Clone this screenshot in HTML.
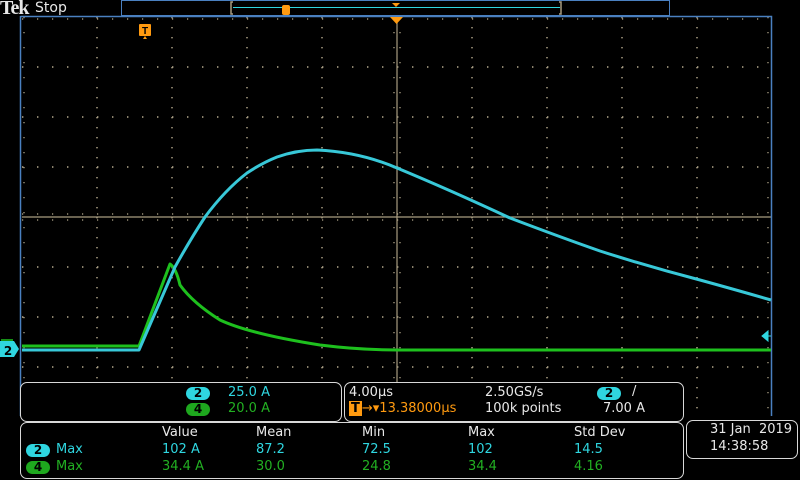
<!DOCTYPE html><html><head><style>
body{margin:0;width:800px;height:480px;background:#000;overflow:hidden;position:relative;font-family:"DejaVu Sans","Liberation Sans",sans-serif;}
.t{position:absolute;font-size:13px;white-space:nowrap;}
.c{color:#2fd6e0}.g{color:#22b022}.w{color:#e8e8e8}.o{color:#ff9a10}
.box{position:absolute;border:1px solid #d8d8d8;border-radius:7px;}
.pill{position:absolute;width:24px;height:13px;border-radius:7px;color:#000;font-weight:bold;font-size:12px;text-align:center;line-height:13px;}
</style></head><body>
<svg width="800" height="480" style="position:absolute;left:0;top:0">
<g stroke="#b8ac90" stroke-width="1.4" stroke-dasharray="1.4 13.6" fill="none">
<path d="M22 67H771M22 117H771M22 167H771M22 267H771M22 317H771M22 367H771"/>
</g>
<g stroke="#b8ac90" stroke-width="1.4" stroke-dasharray="1.4 8.6" fill="none">
<path d="M97 17V417M172 17V417M247 17V417M322 17V417M472 17V417M547 17V417M622 17V417M697 17V417"/>
</g>
<path d="M22 217H771M397 17V417" stroke="#a89c80" stroke-width="1.2"/>
<g stroke="#b8ac90" stroke-width="1.2" stroke-dasharray="1.2 13.8"><path d="M22 214H771M22 220H771M22 19H771M394 17V417M400 17V417M24 17V417M768 17V417"/></g>
<path d="M20.5 16V416M20.5 16.5H771.5V416" stroke="#4a80c0" stroke-width="1.5" fill="none"/>
<rect x="121.5" y="0.5" width="548" height="15" fill="none" stroke="#4a80c0"/>
<path d="M233 2H231V14H233M559 2H561V14H559" stroke="#a89c80" stroke-width="1.5" fill="none"/>
<path d="M233 7.5H560" stroke="#2fd6e0"/>
<path d="M392 3H400L396 7Z" fill="#ff9a10"/>
<path d="M390 17H403L396.5 24Z" fill="#ff9a10"/>
<rect x="282" y="5" width="8" height="10" rx="2" fill="#ff9a10"/>
<rect x="139" y="24" width="12" height="12" rx="1" fill="#ff9a10"/><path d="M145 36L143 39H147Z" fill="#ff9a10"/>
<text x="145" y="34" font-size="10" font-weight="bold" text-anchor="middle" fill="#000" font-family="Liberation Sans">T</text>
<path d="M22 346H139L170 264Q176 268 180 285Q193 303 220 320Q250 334 320 345Q360 350 397 350H771" stroke="#1ec01e" stroke-width="3" fill="none" stroke-linejoin="round"/>
<path d="M22 350H139L175 267Q190 240 205 217Q225 190 247 173Q262 163 277 157Q297 150 317 150Q360 152 397 168Q450 190 510 218Q560 237 600 251Q650 267 700 280Q740 291 771 300" stroke="#38c8d8" stroke-width="3" fill="none" stroke-linejoin="round"/>
<path d="M762 336L768 331V341Z M766 336H771" fill="#2fd6e0" stroke="#2fd6e0"/>
<path d="M0 341H14L19 349L14 357H0Z" fill="#2fd6e0"/><path d="M1 340H13" stroke="#1ec01e" stroke-width="1.5"/>
<text x="8" y="355" font-size="12" font-weight="bold" text-anchor="middle" fill="#000">2</text>
</svg>
<div class="t w" style="left:0;top:-3px;font-family:'Liberation Serif',serif;font-weight:bold;font-size:20px;letter-spacing:-1px">Tek</div>
<div class="t w" style="left:35px;top:0px;font-size:14px">Stop</div>
<div class="box" style="left:20px;top:382px;width:320px;height:38px;background:#000"></div>
<div class="pill" style="left:186px;top:387px;background:#2fd6e0">2</div>
<div class="pill" style="left:186px;top:403px;background:#1ea81e">4</div>
<div class="t c" style="left:228px;top:385px">25.0 A</div>
<div class="t g" style="left:228px;top:401px">20.0 A</div>
<div class="box" style="left:344px;top:382px;width:338px;height:38px;background:#000"></div>
<div class="t w" style="left:349px;top:385px">4.00µs</div>
<div class="t w" style="left:485px;top:385px">2.50GS/s</div>
<div class="pill" style="left:597px;top:387px;background:#2fd6e0">2</div>
<div class="t w" style="left:632px;top:384px">/</div>
<div class="t o" style="left:349px;top:401px"><span style="background:#ff9a10;color:#000;font-weight:bold;padding:0 2px">T</span>→▾13.38000µs</div>
<div class="t w" style="left:485px;top:401px">100k points</div>
<div class="t w" style="left:603px;top:401px">7.00 A</div>
<div class="box" style="left:20px;top:422px;width:662px;height:55px;background:#000"></div>
<div class="t w" style="left:162px;top:425px">Value</div><div class="t w" style="left:256px;top:425px">Mean</div><div class="t w" style="left:362px;top:425px">Min</div><div class="t w" style="left:468px;top:425px">Max</div><div class="t w" style="left:574px;top:425px">Std Dev</div>
<div class="pill" style="left:26px;top:444px;background:#2fd6e0">2</div><div class="t c" style="left:56px;top:442px">Max</div>
<div class="t c" style="left:162px;top:442px">102 A</div><div class="t c" style="left:256px;top:442px">87.2</div><div class="t c" style="left:362px;top:442px">72.5</div><div class="t c" style="left:468px;top:442px">102</div><div class="t c" style="left:574px;top:442px">14.5</div>
<div class="pill" style="left:26px;top:461px;background:#1ea81e">4</div><div class="t g" style="left:56px;top:459px">Max</div>
<div class="t g" style="left:162px;top:459px">34.4 A</div><div class="t g" style="left:256px;top:459px">30.0</div><div class="t g" style="left:362px;top:459px">24.8</div><div class="t g" style="left:468px;top:459px">34.4</div><div class="t g" style="left:574px;top:459px">4.16</div>
<div class="box" style="left:686px;top:420px;width:110px;height:37px;background:#000"></div>
<div class="t w" style="left:710px;top:422px">31 Jan &nbsp;2019</div>
<div class="t w" style="left:710px;top:439px">14:38:58</div>
</body></html>
